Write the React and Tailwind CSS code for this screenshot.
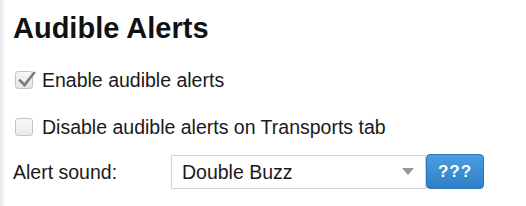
import React from "react";

export default function App() {
  return (
    <div className="relative w-[526px] h-[206px] bg-white overflow-hidden" style={{ fontFamily: '"Liberation Sans", Arial, sans-serif' }}>
      <div className="absolute left-0 top-0 h-full w-[6px] bg-gradient-to-r from-[#e6e6e6] to-white" />
      <div className="relative pl-[13px] pt-[12px]">
        <h1 className="text-[29px] leading-[32px] font-bold text-[#111] m-0">Audible Alerts</h1>
        <div className="mt-[24px] flex items-center h-[24px]">
          <span className="ml-[2px] w-[18px] h-[18px] rounded-[3px] border border-[#c4c4c4] bg-gradient-to-b from-[#f7f7f7] to-[#e4e4e4] relative flex items-center justify-center">
            <svg width="20" height="18" viewBox="0 0 20 18" className="absolute left-[1px] -top-[2px]">
              <path d="M3 10.5 L7.5 15 L17 3" fill="none" stroke="#7a7a7a" strokeWidth="2.6" strokeLinecap="square" />
            </svg>
          </span>
          <span className="ml-[9px] text-[19.5px] leading-[24px] text-[#1a1a1a]">Enable audible alerts</span>
        </div>
        <div className="mt-[23px] flex items-center h-[24px]">
          <span className="ml-[2px] w-[18px] h-[18px] rounded-[3px] border border-[#c4c4c4] bg-gradient-to-b from-[#fbfbfb] to-[#e8e8e8]" />
          <span className="ml-[9px] text-[19.5px] leading-[24px] text-[#1a1a1a]">Disable audible alerts on Transports tab</span>
        </div>
        <div className="mt-[15px] flex items-center h-[35px]">
          <span className="w-[158px] text-[19.5px] leading-[24px] text-[#1a1a1a]">Alert sound:</span>
          <div className="w-[255px] h-[34px] border border-[#d4d4d4] bg-white flex items-center justify-between pl-[10px] pr-[11px]">
            <span className="text-[19.5px] leading-[24px] text-[#1a1a1a]">Double Buzz</span>
            <svg width="12" height="7" viewBox="0 0 12 7"><path d="M0 0 H12 L6 7 Z" fill="#999" /></svg>
          </div>
          <button className="w-[58px] h-[35px] rounded-[4px] border border-[#2d74b8] bg-gradient-to-b from-[#4c9de2] to-[#2f7fc6] text-white font-bold text-[17px] leading-none tracking-[1px] flex items-center justify-center">???</button>
        </div>
      </div>
    </div>
  );
}
